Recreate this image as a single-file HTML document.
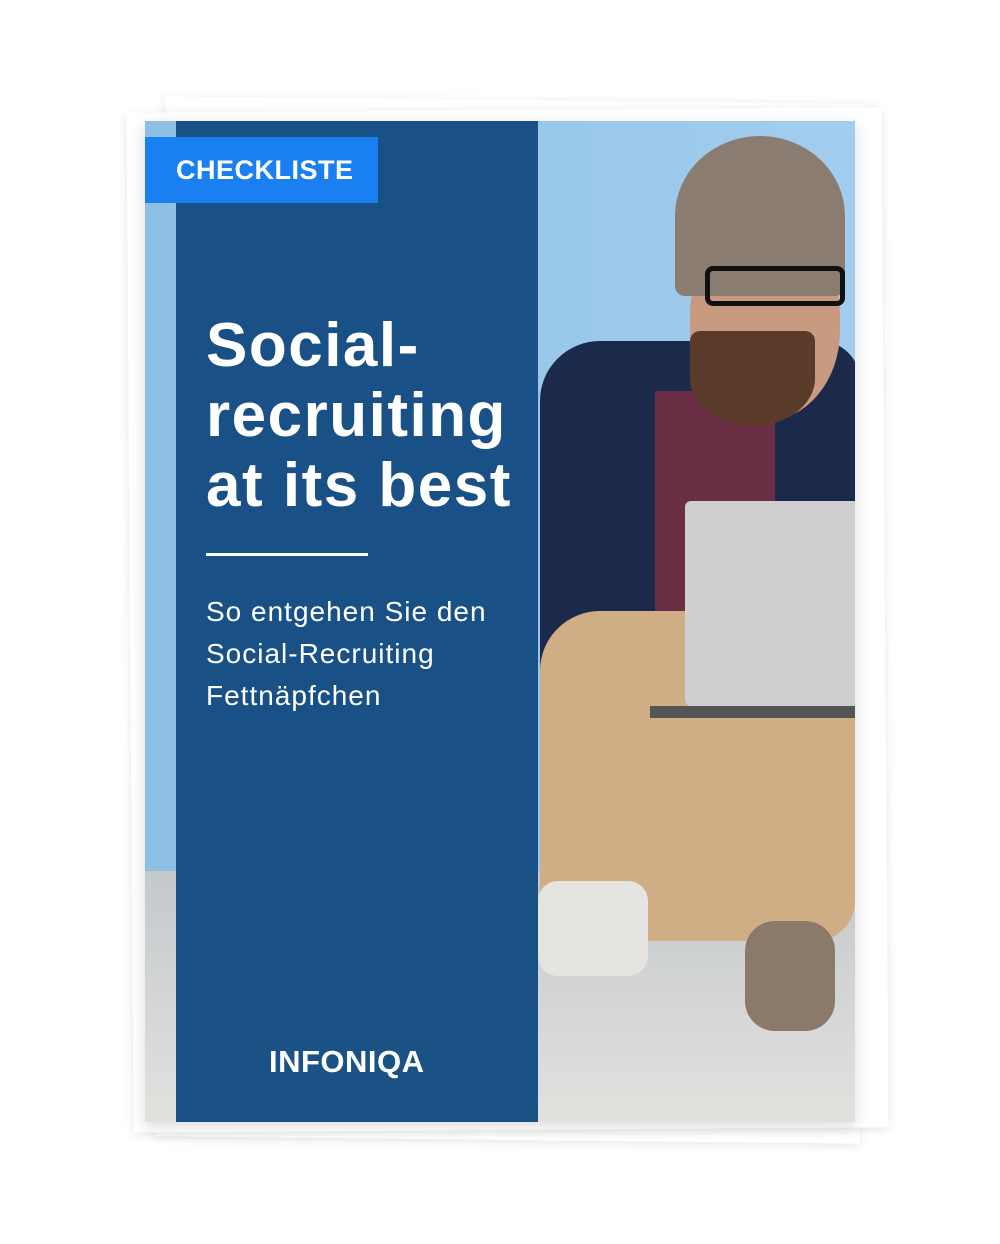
<!DOCTYPE html>
<html><head><style>
body{margin:0;width:1000px;height:1244px;background:#fff;position:relative;overflow:hidden;font-family:"Liberation Sans",sans-serif}
.a{position:absolute}
</style></head><body>
<div class="a" style="left:120px;top:95px;width:770px;height:1060px;background:radial-gradient(ellipse at center,rgba(0,0,0,.08),rgba(0,0,0,0) 70%)"></div>
<div class="a" style="left:160px;top:100px;width:705px;height:1040px;background:#fff;box-shadow:0 2px 10px rgba(0,0,0,.1);transform:rotate(.6deg)"></div>
<div class="a" style="left:130px;top:110px;width:755px;height:1020px;background:#fff;box-shadow:0 2px 10px rgba(0,0,0,.1);transform:rotate(-.4deg)"></div>
<div class="a" style="left:145px;top:121px;width:710px;height:1001px;overflow:hidden;background:#8ec3ea;box-shadow:0 4px 14px rgba(0,0,0,.15)">
 <div class="a" style="left:0;top:0;width:710px;height:760px;background:linear-gradient(90deg,#8ec0e6,#a2cdee)"></div>
 <div class="a" style="left:0;top:750px;width:710px;height:251px;background:linear-gradient(#c4c9cc,#e3e1de)"></div>
 <div class="a" style="left:395px;top:220px;width:320px;height:480px;background:#1b2a4a;border-radius:60px 40px 10px 10px"></div>
 <div class="a" style="left:510px;top:270px;width:120px;height:330px;background:#6b2f45"></div>
 <div class="a" style="left:545px;top:120px;width:150px;height:180px;background:#c89a80;border-radius:40% 40% 50% 50%"></div>
 <div class="a" style="left:545px;top:210px;width:125px;height:95px;background:#5a3b2a;border-radius:10px 10px 50% 50%"></div>
 <div class="a" style="left:530px;top:15px;width:170px;height:160px;background:#8a7c71;border-radius:50% 50% 10px 10px"></div>
 <div class="a" style="left:560px;top:145px;width:140px;height:40px;border:5px solid #111;border-radius:8px;box-sizing:border-box"></div>
 <div class="a" style="left:395px;top:490px;width:315px;height:330px;background:#cfae86;border-radius:60px 20px 40px 40px"></div>
 <div class="a" style="left:540px;top:380px;width:175px;height:205px;background:#cfcfcf;border-radius:6px"></div>
 <div class="a" style="left:505px;top:585px;width:205px;height:12px;background:#555"></div>
 <div class="a" style="left:393px;top:760px;width:110px;height:95px;background:#e6e4e0;border-radius:20px"></div>
 <div class="a" style="left:600px;top:800px;width:90px;height:110px;background:#8b7a6a;border-radius:30px"></div>
 <div class="a" style="left:31px;top:0;width:362px;height:1001px;background:rgba(22,79,132,.98)"></div>
 <div class="a" style="left:0;top:16px;width:233px;height:66px;background:#1a7ff0;color:#fff;font-weight:bold;font-size:27px;line-height:66px;text-indent:31px;letter-spacing:.5px">CHECKLISTE</div>
 <div class="a" style="left:61px;top:190px;color:#fff;font-weight:bold;font-size:62px;line-height:70px;letter-spacing:1.5px">Social-<br>recruiting<br>at its best</div>
 <div class="a" style="left:61px;top:432px;width:162px;height:3px;background:#fff"></div>
 <div class="a" style="left:61px;top:470px;color:#fff;font-size:28px;line-height:42px;letter-spacing:1px">So entgehen Sie den<br>Social-Recruiting<br>Fettnäpfchen</div>
 <div class="a" style="left:124px;top:923px;color:#fff;font-size:31px;font-weight:bold;letter-spacing:.5px">INFONIQA</div>
</div>
</body></html>
